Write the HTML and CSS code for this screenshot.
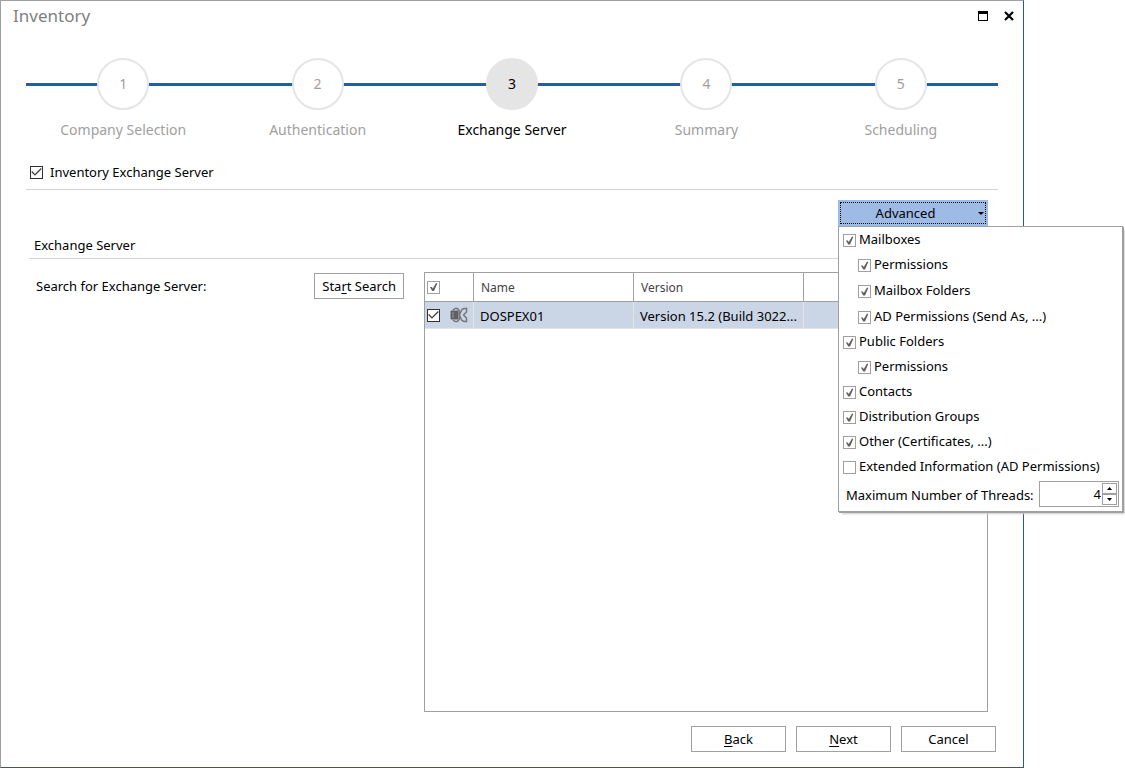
FILE: index.html
```html
<!DOCTYPE html><html lang="en"><head><meta charset="utf-8"/>
<meta name="viewport" content="width=device-width, initial-scale=1.0"/>
<title>Inventory</title>
<link rel="stylesheet" href="styles.css">
</head>
<body>

<main class="window">
  <header class="titlebar">
    <h1>Inventory</h1>
    <button class="winbtn" aria-label="Maximize"><svg width="10" height="10" viewBox="0 0 10 10" shape-rendering="crispEdges"><path d="M0 0H10V10H0ZM1 3V9H9V3Z" fill-rule="evenodd"/></svg></button>
    <button class="winbtn" aria-label="Close"><svg width="10" height="10" viewBox="0 0 10 10"><path d="M1 1L9 9M9 1L1 9" stroke="#000" stroke-width="2.2"/></svg></button>
  </header>

  <ol class="steps">
    <li><span class="num">1</span>Company Selection</li>
    <li><span class="num">2</span>Authentication</li>
    <li class="current"><span class="num">3</span>Exchange Server</li>
    <li><span class="num">4</span>Summary</li>
    <li><span class="num">5</span>Scheduling</li>
  </ol>

  <div class="enable">
    <input type="checkbox" class="check dark" id="inventory" checked><label for="inventory">Inventory Exchange Server</label>
  </div>

  <section class="page">
    <div class="toolbar">
      <div class="dropdown">
        <button class="advanced"><span>Advanced</span><svg width="6" height="3" viewBox="0 0 6 3"><path d="M0 0H6L3 3Z"/></svg></button>
        <div class="menu">
          <label><input type="checkbox" class="check" checked>Mailboxes</label>
          <div class="sub">
            <label><input type="checkbox" class="check" checked>Permissions</label>
            <label><input type="checkbox" class="check" checked>Mailbox Folders</label>
            <label><input type="checkbox" class="check" checked>AD Permissions (Send As, ...)</label>
          </div>
          <label><input type="checkbox" class="check" checked>Public Folders</label>
          <div class="sub">
            <label><input type="checkbox" class="check" checked>Permissions</label>
          </div>
          <label><input type="checkbox" class="check" checked>Contacts</label>
          <label><input type="checkbox" class="check" checked>Distribution Groups</label>
          <label><input type="checkbox" class="check" checked>Other (Certificates, ...)</label>
          <label><input type="checkbox" class="check">Extended Information (AD Permissions)</label>
          <div class="threads">
            <label for="threads">Maximum Number of Threads:</label>
            <div class="spin">
              <input type="number" id="threads" value="4">
              <div class="arrows">
                <button aria-label="Up"><svg width="5" height="3" viewBox="0 0 5 3"><path d="M0 3H5L2.500 0Z"/></svg></button>
                <button aria-label="Down"><svg width="5" height="3" viewBox="0 0 5 3"><path d="M0 0H5L2.500 3Z"/></svg></button>
              </div>
            </div>
          </div>
        </div>
      </div>
    </div>

    <h2>Exchange Server</h2>

    <div class="content">
      <div class="search">
        <span>Search for Exchange Server:</span>
        <button class="btn">Sta<u>r</u>t Search</button>
      </div>
      <div class="grid">
        <table>
          <colgroup><col class="c-check"><col class="c-name"><col class="c-version"><col></colgroup>
          <thead>
            <tr><th><input type="checkbox" class="check" aria-label="Select all" checked></th><th>Name</th><th>Version</th><th></th></tr>
          </thead>
          <tbody>
            <tr>
              <td><div class="pick"><input type="checkbox" class="check dark" aria-label="DOSPEX01" checked>
                <svg width="18" height="16" viewBox="0 0 18 16" fill="none" stroke="#777" stroke-width="1.500">
                  <path d="M3 3L5 1.500H7.500L9.500 4V12L7.500 14.500H5L3 13"/>
                  <path d="M9.500 7.500L12 2.500L14 1.500H16.500V5L13.500 8L16.500 11V14.500H14L12 13.500L9.500 8.500"/>
                  <path d="M1 4H8V12H1Z" fill="#606060" stroke="#606060" stroke-width="1"/>
                  <path d="M3 5V11" stroke="#999" stroke-width="1"/>
                </svg></div></td>
              <td>DOSPEX01</td>
              <td>Version 15.2 (Build 3022...</td>
              <td></td>
            </tr>
          </tbody>
        </table>
      </div>
    </div>
  </section>

  <footer class="buttons">
    <button class="btn"><u>B</u>ack</button>
    <button class="btn"><u>N</u>ext</button>
    <button class="btn">Cancel</button>
  </footer>
</main>

</body>
</html>
```
FILE: styles.css
```css
* {
  box-sizing: border-box;
}
body {
  margin: 0;
  background: #fff;
  color: #000;
  font: 13px/20px "Noto Sans", "Open Sans", sans-serif;
  --line: #a0a0a0;
  --soft: #d4d4d4;
  --blue: #0f64b4;
}
button, input {
  font: inherit;
  color: inherit;
}
u {
  text-underline-offset: 2px;
}
.window {
  display: flex;
  flex-direction: column;
  min-height: 100vh;
  margin-right: 101px;
  border: 1px solid var(--line);
  border-right-color: #2b579a;
  border-bottom-color: #2b579a;
}

.titlebar {
  display: flex;
  align-items: center;
  gap: 6px;
  height: 30px;
  padding: 0 4px 0 12px;
}
h1 {
  flex: 1;
  margin: 0;
  font-size: 17px;
  font-weight: normal;
  color: #808080;
}
.winbtn {
  display: flex;
  align-items: center;
  justify-content: center;
  width: 20px;
  height: 20px;
  padding: 0;
  border: 0;
  background: none;
}

.steps {
  display: flex;
  margin: 27px 25px 0;
  padding: 0;
  list-style: none;
  font-size: 14px;
  color: #a0a0a0;
  background: linear-gradient(var(--blue), var(--blue)) 0 25px / 100% 3px no-repeat;
}
.steps li {
  display: flex;
  flex: 1;
  flex-direction: column;
  align-items: center;
  gap: 10px;
}
.num {
  display: flex;
  align-items: center;
  justify-content: center;
  width: 52px;
  height: 52px;
  border: 2px solid #e5e5e5;
  border-radius: 50%;
  background: #fff;
}
.current {
  color: #000;
}
.current .num {
  background: #e5e5e5;
}

.check {
  appearance: none;
  display: grid;
  flex: none;
  place-items: center;
  width: 13px;
  height: 13px;
  margin: 0;
  border: 1px solid var(--line);
  background: #fff;
}
.check:checked::before {
  content: "";
  width: 9px;
  height: 9px;
  background: #606060;
  clip-path: polygon(10% 50%, 30% 50%, 42% 66%, 78% 6%, 92% 12%, 56% 94%, 36% 94%);
}
.check.dark {
  border-color: #303030;
}
.check.dark:checked::before {
  width: 11px;
  height: 11px;
  background: #404040;
  clip-path: polygon(2% 50%, 10% 42%, 36% 68%, 90% 14%, 98% 22%, 36% 84%);
}

.enable {
  display: flex;
  align-items: center;
  gap: 7px;
  height: 34px;
  margin: 16px 25px 0;
  padding-left: 4px;
  padding-bottom: 1px;
  border-bottom: 1px solid var(--soft);
}

.page {
  display: flex;
  flex: 1;
  flex-direction: column;
  padding: 10px 35px 0 28px;
}
.toolbar {
  display: flex;
  justify-content: flex-end;
}
.dropdown {
  position: relative;
  width: 150px;
}
.advanced {
  display: flex;
  align-items: center;
  width: 100%;
  height: 26px;
  padding: 0 3px 0 0;
  border: 1px solid #9ebbe6;
  background: #9ebbe6;
  outline: 1px dotted #000;
  outline-offset: -3px;
}
.advanced span {
  flex: 1;
  padding-right: 6px;
}
.menu {
  position: absolute;
  top: 100%;
  left: 0;
  z-index: 1;
  width: 285px;
  border: 1px solid var(--line);
  background: #fff;
  box-shadow: 1px 1px 0 #a0a0a0, 3px 3px 2px -1px #ccc;
}
.menu > label, .sub label {
  display: flex;
  align-items: center;
  gap: 3px;
  height: 25px;
  padding-left: 4px;
  padding-bottom: 1px;
}
.menu .check {
  margin-top: 3px;
}
.sub {
  display: grid;
  gap: 1px;
  padding-left: 15px;
}
.threads {
  display: flex;
  align-items: flex-start;
  justify-content: space-between;
  padding: 2px 3px 2px 7px;
}
.threads label {
  line-height: 28px;
}
.spin {
  display: flex;
  width: 80px;
  height: 26px;
  padding: 1px;
  border: 1px solid var(--line);
}
.spin input {
  flex: 1;
  min-width: 0;
  padding: 0 1px;
  border: 0;
  outline: 0;
  text-align: right;
  appearance: textfield;
}
.spin input::-webkit-inner-spin-button {
  appearance: none;
  margin: 0;
}
.arrows {
  display: grid;
  width: 15px;
}
.arrows button {
  display: flex;
  align-items: center;
  justify-content: center;
  padding: 0;
  border: 1px solid var(--line);
  background: #fff;
}

h2 {
  margin: 0;
  padding: 9px 0 3px 5px;
  border-bottom: 1px solid var(--soft);
  font-size: 13px;
  font-weight: normal;
}
.content {
  display: flex;
  flex: 1;
  gap: 20px;
  padding: 13px 0 0 7px;
}
.search {
  display: flex;
  flex: 1;
  align-items: center;
  justify-content: space-between;
  height: 28px;
}
.btn {
  height: 26px;
  padding: 0 7px;
  border: 1px solid var(--line);
  background: #fff;
  white-space: nowrap;
}
.grid {
  width: 564px;
  border: 1px solid var(--line);
}
table {
  width: 100%;
  border-collapse: separate;
  border-spacing: 0;
  table-layout: fixed;
}
.c-check {
  width: 49px;
}
.c-name {
  width: 160px;
}
.c-version {
  width: 170px;
}
th, td {
  padding: 1px 0 0 7px;
  border-right: 1px solid var(--line);
  border-bottom: 1px solid var(--line);
  text-align: left;
  white-space: nowrap;
}
th {
  height: 29px;
  font-size: 12px;
  font-weight: normal;
  color: #444;
}
td {
  height: 27px;
  padding-left: 6px;
  border-color: #e4e4e4;
  background: #cad5e6;
}
th:first-child, td:first-child {
  padding-top: 0;
  padding-left: 2px;
}
th:last-child, td:last-child {
  border-right: 0;
}
.pick {
  display: flex;
  align-items: center;
  gap: 10px;
}

.buttons {
  display: flex;
  justify-content: flex-end;
  gap: 10px;
  padding: 14px 27px 15px;
}
.buttons .btn {
  width: 95px;
}
```
